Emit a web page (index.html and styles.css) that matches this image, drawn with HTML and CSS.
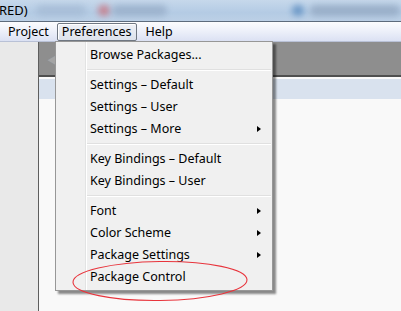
FILE: index.html
```html
<!DOCTYPE html>
<html lang="en">
<head>
    <meta charset="UTF-8">
    <title>Preferences menu</title>
    <link rel="stylesheet" href="styles.css">
</head>
<body>
    <div class="titlebar">
        <span class="title">RED)</span>
        <span class="blur b1"></span>
        <span class="blur b2"></span>
        <span class="blur b3"></span>
        <span class="blur b4"></span>
        <span class="blur b5"></span>
    </div>
    <div class="menubar">
        <span class="menu-item">Project</span>
        <span class="menu-item open">Preferences</span>
        <span class="menu-item">Help</span>
    </div>
    <div class="workspace">
        <div class="sidebar"></div>
        <div class="editor">
            <div class="tabbar"><span class="tab-arrow">&#9664;</span></div>
            <div class="lines">
                <div class="line-current"></div>
            </div>
        </div>
    </div>

    <div class="dropdown">
        <div class="row">Browse Packages...</div>
        <div class="sep"></div>
        <div class="row">Settings – Default</div>
        <div class="row">Settings – User</div>
        <div class="row sub">Settings – More</div>
        <div class="sep"></div>
        <div class="row">Key Bindings – Default</div>
        <div class="row">Key Bindings – User</div>
        <div class="sep"></div>
        <div class="row sub">Font</div>
        <div class="row sub">Color Scheme</div>
        <div class="row sub">Package Settings</div>
        <div class="row">Package Control</div>
    </div>

    <!-- hand drawn marker round the last item -->
    <svg class="marker" width="190" height="46" viewBox="0 0 190 46">
        <ellipse cx="95" cy="22" rx="87" ry="19.5" fill="none" stroke="#e8343c" stroke-width="1.1" transform="rotate(-0.8 95 22)"/>
    </svg>
</body>
</html>
```

FILE: styles.css
```css
body {
    margin: 0;
    width: 401px;
    height: 311px;
    overflow: hidden;
    font-family: "Noto Sans", "Noto Sans CJK SC", sans-serif;
    font-size: 12.5px;
    color: #000;
    background: #f9f9f9;
    position: relative;
}

.titlebar {
    height: 21px;
    border-bottom: 1px solid #5d6b7c;
    background: linear-gradient(180deg, #c6d8eb 0%, #b4cbe4 60%, #bcd0e6 100%);
    position: relative;
    overflow: hidden;
}
.title {
    position: relative;
    z-index: 1;
    display: block;
    line-height: 21px;
    font-size: 13px;
    margin-left: -1px;
}
.blur {
    position: absolute;
    top: 5px;
    height: 11px;
    border-radius: 5px;
    filter: blur(3px);
    opacity: 0.8;
}
.b1 { left: 36px; width: 50px; background: #a5bbd5; }
.b2 { left: 98px; width: 12px; background: #c97480; }
.b3 { left: 112px; width: 55px; background: #97adc8; }
.b4 { left: 292px; width: 12px; background: #5a8cc0; }
.b5 { left: 310px; width: 90px; background: #93a8c2; }

.menubar {
    height: 19px;
    display: flex;
    align-items: center;
    padding-left: 1px;
    background: linear-gradient(180deg, #fbfcfe 0%, #eef1fa 45%, #dbe1f3 100%);
    border-bottom: 1px solid #b9c1d6;
}
.menu-item {
    padding: 0 6px;
    line-height: 16px;
    border: 1px solid transparent;
    border-radius: 2px;
}
.menu-item.open {
    border-color: #6f7782;
    background: linear-gradient(180deg, #eef1f7 0%, #dde2ec 100%);
    box-shadow: inset 1px 1px 0 #fff;
    margin: 0 1px 0 1px;
    padding: 0 5px 0 4px;
}

.workspace {
    display: flex;
    height: 269px;
}
.sidebar {
    width: 38px;
    background: #e9e9e9;
    border-right: 1px solid #5e5e5e;
}
.editor {
    flex: 1;
    background: #f9f9f9;
}
.tabbar {
    height: 33px;
    background: #8e8e8e;
    border-bottom: 2px solid #4f4f4f;
    padding-left: 8px;
}
.tab-arrow {
    color: #a4a4a4;
    font-size: 10px;
    line-height: 36px;
}
.lines {
    padding-top: 2px;
}
.line-current {
    height: 20px;
    background: #d9e2ee;
}

.dropdown {
    position: absolute;
    left: 55px;
    top: 41px;
    width: 216px;
    padding: 2px 0;
    background: #f0f0f0;
    border: 1px solid #979797;
    box-shadow: 3px 3px 2px rgba(0, 0, 0, 0.45);
    background-image: linear-gradient(90deg, transparent 29px, #e2e3e3 29px, #e2e3e3 30px, #fff 30px, #fff 31px, transparent 31px);
}
.row {
    height: 22px;
    line-height: 22px;
    padding-left: 34px;
    position: relative;
}
.row.sub::after {
    content: "";
    position: absolute;
    right: 11px;
    top: 8px;
    border-left: 4px solid #000;
    border-top: 3.5px solid transparent;
    border-bottom: 3.5px solid transparent;
}
.sep {
    height: 8px;
    margin-left: 31px;
    margin-right: 1px;
    background: linear-gradient(180deg, transparent 3px, #e0e0e0 3px, #e0e0e0 4px, #fff 4px, #fff 5px, transparent 5px);
}

.marker {
    position: absolute;
    left: 65px;
    top: 259px;
}
```
